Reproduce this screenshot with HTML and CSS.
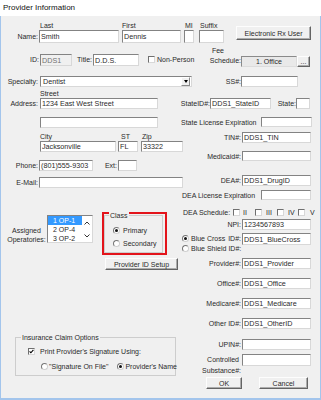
FILE: index.html
```html
<!DOCTYPE html>
<html>
<head>
<meta charset="utf-8">
<title>Provider Information</title>
<link rel="stylesheet" href="styles.css">
</head>
<body>
<div class="window">
  <div class="titlebar">Provider Information</div>
  <div class="dlg">
    <div class="row r-namelbl">
      <span class="nl-last">Last</span><span class="nl-first">First</span><span class="nl-mi">MI</span><span>Suffix</span>
    </div>
    <div class="row r-name">
      <label class="lbl">Name:</label>
      <input class="in w-last" value="Smith">
      <input class="in w-first" value="Dennis">
      <input class="in w-mi" value="">
      <input class="in w-suffix" value="">
      <button class="btn b-erx">Electronic Rx User</button>
    </div>
    <div class="row r-id">
      <label class="lbl lbl-id">ID:</label>
      <input class="in dis w-id" value="DDS1">
      <label class="lbl-title">Title:</label>
      <input class="in w-title" value="D.D.S.">
      <span class="cb cb-np"></span><span class="np">Non-Person</span>
      <div class="fee-lbl"><div class="fee-l1">Fee</div><div>Schedule:</div></div>
      <div class="fee-box">1. Office</div>
      <button class="btn b-dots">...</button>
    </div>

    <div class="cols">
      <div class="lcol">
        <div class="row r-spec">
          <label class="lbl">Specialty:</label>
          <div class="select"><span class="sel-val">Dentist</span><span class="sel-arrow"></span></div>
        </div>
        <div class="row r-street"><span>Street</span></div>
        <div class="row r-addr">
          <label class="lbl">Address:</label>
          <input class="in w-addr" value="1234 East West Street">
        </div>
        <div class="row r-addr2">
          <input class="in w-addr" value="">
        </div>
        <div class="row r-citylbl">
          <span class="cl-city">City</span><span class="cl-st">ST</span><span>Zip</span>
        </div>
        <div class="row r-city">
          <input class="in w-city" value="Jacksonville">
          <input class="in w-st" value="FL">
          <input class="in w-zip" value="33322">
        </div>
        <div class="row r-phone">
          <label class="lbl">Phone:</label>
          <input class="in w-phone" value="(801)555-9303">
          <label class="lbl-ext">Ext:</label>
          <input class="in w-ext" value="">
        </div>
        <div class="row r-email">
          <label class="lbl">E-Mail:</label>
          <input class="in w-email" value="">
        </div>
        <div class="row r-ops">
          <div class="ops-lbl"><div>Assigned</div><div>Operatories:</div></div>
          <div class="listbox">
            <div class="items">
              <div class="item sel">1 OP-1</div>
              <div class="item">2 OP-4</div>
              <div class="item">3 OP-2</div>
            </div>
            <div class="lscroll">
              <svg width="6" height="4" viewBox="0 0 6 4"><path d="M0.5 3.5 L3 1 L5.5 3.5" fill="none" stroke="#333" stroke-width="1"/></svg>
              <svg width="6" height="4" viewBox="0 0 6 4"><path d="M0.5 0.5 L3 3 L5.5 0.5" fill="none" stroke="#333" stroke-width="1"/></svg>
            </div>
          </div>
          <div class="redbox">
            <div class="group cgroup">
              <span class="legend">Class</span>
              <div class="gline"><span class="rb on"></span><span class="rtxt">Primary</span></div>
              <div class="gline"><span class="rb"></span><span class="rtxt">Secondary</span></div>
            </div>
          </div>
        </div>
        <div class="row r-pis">
          <button class="btn b-pis">Provider ID Setup</button>
        </div>
        <div class="group igroup">
          <span class="legend">Insurance Claim Options</span>
          <div class="gline ig-l1">
            <span class="cb"><svg width="5" height="5" viewBox="0 0 5 5"><path d="M0.6 2.4 L1.9 3.8 L4.4 0.9" fill="none" stroke="#000" stroke-width="1.1"/></svg></span>
            <span class="cbtxt">Print Provider's Signature Using:</span>
          </div>
          <div class="gline ig-l2">
            <span class="rb"></span><span class="rtxt sof">"Signature On File"</span>
            <span class="rb on rb-pn"></span><span class="rtxt">Provider's Name</span>
          </div>
        </div>
      </div>

      <div class="rcol">
        <div class="row r-ss"><label class="rl">SS#:</label><input class="in w-ss" value=""></div>
        <div class="row r-stid">
          <label class="rl rl-stid">StateID#:</label><input class="in w-stid" value="DDS1_StateID">
          <label class="rl-state">State:</label><input class="in w-state" value="">
        </div>
        <div class="row r-slic"><label class="rl-long">State License Expiration</label><input class="in w-exp" value=""></div>
        <div class="row r-tin"><label class="rl">TIN#:</label><input class="in w-r" value="DDS1_TIN"></div>
        <div class="row r-mcaid"><label class="rl">Medicaid#:</label><input class="in w-r" value=""></div>
        <div class="row r-dea"><label class="rl">DEA#:</label><input class="in w-r" value="DDS1_DrugID"></div>
        <div class="row r-dlic"><label class="rl-long rl-dea">DEA License Expiration</label><input class="in w-exp2" value=""></div>
        <div class="row r-dsch">
          <span class="dsch-lbl">DEA Schedule:</span>
          <span class="sch-opt o2"><span class="cb"></span><span class="sch">II</span></span>
          <span class="sch-opt o3"><span class="cb"></span><span class="sch">III</span></span>
          <span class="sch-opt o4"><span class="cb"></span><span class="sch">IV</span></span>
          <span class="sch-opt o5"><span class="cb"></span><span class="sch">V</span></span>
        </div>
        <div class="row r-npi"><label class="rl">NPI:</label><input class="in w-r" value="1234567893"></div>
        <div class="row r-bc">
          <div class="bc-opts">
            <div class="bc-line"><span class="rb on"></span><span class="bc-name">Blue Cross</span><span class="bc-id">ID#:</span></div>
            <div class="bc-line"><span class="rb"></span><span class="bc-name">Blue Shield</span><span class="bc-id">ID#:</span></div>
          </div>
          <input class="in w-r bc-in" value="DDS1_BlueCross">
        </div>
        <div class="row r-prov"><label class="rl">Provider#:</label><input class="in w-r" value="DDS1_Provider"></div>
        <div class="row r-off"><label class="rl">Office#:</label><input class="in w-r" value="DDS1_Office"></div>
        <div class="row r-mcare"><label class="rl">Medicare#:</label><input class="in w-r" value="DDS1_Medicare"></div>
        <div class="row r-oth"><label class="rl">Other ID#:</label><input class="in w-r" value="DDS1_OtherID"></div>
        <div class="row r-upin"><label class="rl">UPIN#:</label><input class="in w-r" value=""></div>
        <div class="row r-cs">
          <div class="cs-lbl"><div class="cs-l1">Controlled</div><div>Substance#:</div></div>
          <input class="in w-r cs-in" value="">
        </div>
        <div class="row r-ok">
          <button class="btn b-ok">OK</button>
          <button class="btn b-cancel">Cancel</button>
        </div>
      </div>
    </div>
  </div>
</div>
</body>
</html>
```

FILE: styles.css
```css
* { box-sizing: border-box; }
html, body { margin: 0; padding: 0; }
body {
  width: 321px; height: 400px; overflow: hidden; background: #fff;
  font-family: "Liberation Sans", Arial, sans-serif; font-size: 7px; color: #2a2a2a;
}
.window { width: 321px; height: 400px; display: flex; flex-direction: column; }
.titlebar { flex: none; height: 16px; line-height: 15px; padding-left: 3px; font-size: 8px; color: #111; background: #fff; }
.dlg {
  flex: 1; background: #f0f0f0; display: flex; flex-direction: column;
  border: 1px solid #a3c5ec; border-top: 0; border-bottom-width: 2px;
}
.row { display: flex; align-items: center; flex: none; }

input.in {
  font-family: inherit; font-size: 7.2px; color: #2a2a2a; margin: 0; padding: 0 1px; height: 11px; flex: none;
  background: #fff; border: 1px solid; border-color: #838383 #d8d8d8 #d8d8d8 #838383; outline: none;
}
input.in.dis { background: #f0f0f0; color: #707070; }
.btn {
  font: inherit; color: #2a2a2a; margin: 0; padding: 0; flex: none;
  background: #f0f0f0; border: 1px solid; border-color: #fdfdfd #646464 #646464 #fdfdfd;
  box-shadow: inset -1px -1px 0 #acacac;
  display: flex; align-items: center; justify-content: center;
}
.lbl { width: 37px; text-align: right; flex: none; }

/* checkbox / radio */
.cb {
  width: 7px; height: 7px; flex: none; background: #fff;
  border: 1px solid; border-color: #6f6f6f #d8d8d8 #d8d8d8 #6f6f6f;
  display: flex; align-items: center; justify-content: center;
}
.cb svg { display: block; }
.rb {
  width: 7px; height: 7px; flex: none; border-radius: 50%; background: #fff;
  border: 1px solid; border-color: #767676 #d0d0d0 #d0d0d0 #767676;
  display: flex; align-items: center; justify-content: center;
}
.rb.on::after { content: ""; width: 3px; height: 3px; border-radius: 50%; background: #111; }

/* top */
.r-namelbl { margin-top: 5px; height: 8px; padding-left: 39px; }
.nl-last { width: 82px; }
.nl-first { width: 63px; }
.nl-mi { width: 15px; }
.r-name { margin-top: 1px; height: 13px; align-items: flex-start; }
.r-name .lbl { line-height: 13px; }
.r-name input.in { height: 13px; }
.w-last { width: 80px; margin-left: 1px !important; }
.w-first { width: 59px; margin-left: 3px !important; }
.w-mi { width: 10px; margin-left: 3px !important; }
.w-suffix { width: 25px; margin-left: 5px !important; }
.b-erx { width: 75px; height: 14px; margin-left: 12px; margin-top: -4px; }

.r-id { margin-top: 11px; height: 12px; align-items: flex-start; }
.lbl-id { width: 38px; line-height: 12px; }
.r-id input.in { height: 12px; }
.w-id { width: 32px; margin-left: 1px !important; }
.lbl-title { width: 20px; text-align: right; line-height: 12px; flex: none; }
.w-title { width: 46px; margin-left: 1px !important; }
.cb-np { margin-left: 9px; margin-top: 2px; }
.np { width: 51px; margin-left: 2px; line-height: 12px; flex: none; }
.fee-lbl { width: 33px; margin-top: -8px; line-height: 10px; text-align: right; flex: none; }
.fee-l1 { padding-right: 17px; }
.fee-box {
  width: 56px; height: 11px; margin-top: 2px; flex: none; text-align: center; line-height: 9px;
  background: #e9e9e9; border: 1px solid; border-color: #8a8a8a #dcdcdc #dcdcdc #8a8a8a;
}
.b-dots { width: 13px; height: 11px; margin-top: 2px; }

/* columns */
.cols { display: flex; flex: none; }
.lcol { width: 179px; flex: none; display: flex; flex-direction: column; }
.rcol { width: 140px; flex: none; display: flex; flex-direction: column; }

.r-spec { margin-top: 10px; height: 11px; }
.select {
  width: 152px; height: 11px; margin-left: 2px; flex: none; display: flex;
  background: #fff; border: 1px solid; border-color: #838383 #d8d8d8 #d8d8d8 #838383;
}
.sel-val { flex: 1; padding-left: 2px; line-height: 9px; font-size: 7.2px; }
.sel-arrow {
  width: 9px; height: 9px; flex: none; margin-right: 1px;
  display: flex; align-items: center; justify-content: center;
  background: #f0f0f0; border: 1px solid; border-color: #fff #8a8a8a #8a8a8a #fff;
}
.sel-arrow::after {
  content: ""; width: 0; height: 0;
  border-left: 2.5px solid transparent; border-right: 2.5px solid transparent; border-top: 3px solid #000;
}
.r-street { margin-top: 2px; height: 8px; padding-left: 39px; }
.r-addr { margin-top: 1px; height: 11px; }
.w-addr { width: 118px; margin-left: 2px !important; }
.r-addr2 { margin-top: 8px; height: 11px; padding-left: 37px; }
.r-citylbl { margin-top: 4px; height: 8px; padding-left: 39px; }
.cl-city { width: 81px; }
.cl-st { width: 21px; }
.r-city { margin-top: 1px; height: 11px; padding-left: 39px; }
.w-city { width: 76px; }
.w-st { width: 20px; margin-left: 2px !important; }
.w-zip { width: 42px; margin-left: 3px !important; }
.r-phone { margin-top: 8px; height: 11px; }
.w-phone { width: 54px; margin-left: 1px !important; }
.lbl-ext { width: 24px; text-align: right; flex: none; }
.w-ext { width: 19px; margin-left: 1px !important; }
.r-email { margin-top: 6px; height: 11px; }
.w-email { width: 144px; margin-left: 1px !important; }

.r-ops { margin-top: 24px; height: 43px; align-items: flex-start; }
.ops-lbl { width: 41px; margin-left: 5px; margin-top: 14px; line-height: 9px; text-align: center; flex: none; }
.listbox {
  width: 46px; height: 28px; margin-top: 3px; flex: none; display: flex; overflow: hidden;
  background: #fff; border: 1px solid; border-color: #838383 #d8d8d8 #d8d8d8 #838383;
}
.items { width: 34px; flex: none; }
.item { height: 9px; line-height: 9px; padding-left: 5px; white-space: nowrap; }
.item.sel { background: #3399ff; color: #fff; }
.lscroll { flex: 1; display: flex; flex-direction: column; align-items: center; justify-content: space-between; padding: 5px 0 4px; }
.lscroll svg { display: block; }
.redbox { width: 65px; height: 43px; margin-left: 9px; flex: none; border: 2px solid #e3141b; padding: 1px 2px 0 0; }

.group { border: 1px solid #cdcdcd; position: relative; }
.legend { position: absolute; top: -5px; left: 4px; padding: 0 1px; line-height: 9px; background: #f0f0f0; white-space: nowrap; }
.cgroup { height: 38px; padding: 10px 0 0 8px; display: flex; flex-direction: column; gap: 4px; }
.gline { display: flex; align-items: center; height: 9px; flex: none; }
.rtxt { margin-left: 3px; white-space: nowrap; }
.r-pis { margin-top: 3px; height: 12px; padding-left: 104px; }
.b-pis { width: 73px; height: 12px; }

.igroup { margin-top: 67px; margin-left: 14px; width: 161px; height: 39px; padding-top: 8.5px; flex: none; }
.igroup .legend { left: 5px; top: -5.5px; }
.ig-l1 { padding-left: 12px; }
.cbtxt { margin-left: 5px; white-space: nowrap; }
.ig-l2 { padding-left: 25px; margin-top: 6px; }
.ig-l2 .rtxt { margin-left: 1px; }
.rb-pn { margin-left: 9px; }

/* right column */
.rl { width: 61px; text-align: right; flex: none; }
.w-r { width: 69px; margin-left: 1px !important; }
.r-ss { margin-top: 10px; height: 11px; }
.w-ss { width: 57px; }
.r-stid { margin-top: 11px; height: 11px; }
.rl-stid { width: 30px; }
.w-stid { width: 61px; }
.rl-state { width: 25px; text-align: right; flex: none; }
.w-state { width: 14px; }
.r-slic { margin-top: 8px; height: 10px; }
.r-slic input.in, .r-dlic input.in, .r-mcaid input.in { height: 10px; }
.rl-long { width: 81px; padding-left: 1px; white-space: nowrap; flex: none; }
.rl-dea { padding-left: 2px; }
.w-exp { width: 51px; }
.w-exp2 { width: 50px; }
.r-tin { margin-top: 5px; height: 11px; }
.r-mcaid { margin-top: 8px; height: 10px; }
.r-dea { margin-top: 14px; height: 11px; }
.r-dlic { margin-top: 4px; height: 10px; }
.r-dsch { margin-top: 8px; height: 8px; }
.dsch-lbl { width: 53px; padding-left: 3px; white-space: nowrap; flex: none; }
.sch-opt { display: flex; align-items: center; flex: none; }
.sch { margin-left: 3px; white-space: nowrap; }
.o2 { width: 22px; }
.o3 { width: 22px; }
.o3 .sch, .o4 .sch { margin-left: 4px; }
.o4 { width: 21px; }
.o5 .sch { margin-left: 5px; }
.r-npi { margin-top: 3px; height: 11px; }
.r-bc { margin-top: 3px; height: 20px; align-items: flex-start; }
.bc-opts { width: 62px; flex: none; }
.bc-line { display: flex; align-items: center; height: 10px; padding-left: 2px; padding-right: 1px; white-space: nowrap; }
.bc-name { margin-left: 2px; }
.bc-id { margin-left: auto; padding-left: 2px; }
.bc-in { height: 12px !important; margin-top: 4px; margin-left: 0 !important; }
.r-prov { margin-top: 5px; height: 11px; }
.r-off { margin-top: 9px; height: 11px; }
.r-mcare { margin-top: 9px; height: 11px; }
.r-oth { margin-top: 9px; height: 11px; }
.r-upin { margin-top: 10px; height: 11px; }
.r-cs { margin-top: 4px; height: 22px; align-items: flex-start; }
.cs-lbl { width: 61px; text-align: right; line-height: 11px; flex: none; }
.cs-l1 { padding-right: 2px; }
.cs-in { height: 12px !important; margin-top: 5px; }
.r-ok { margin-top: 1px; height: 12px; }
.b-ok { width: 36px; height: 12px; margin-left: 26px; }
.b-cancel { width: 49px; height: 12px; margin-left: 17px; }
```
